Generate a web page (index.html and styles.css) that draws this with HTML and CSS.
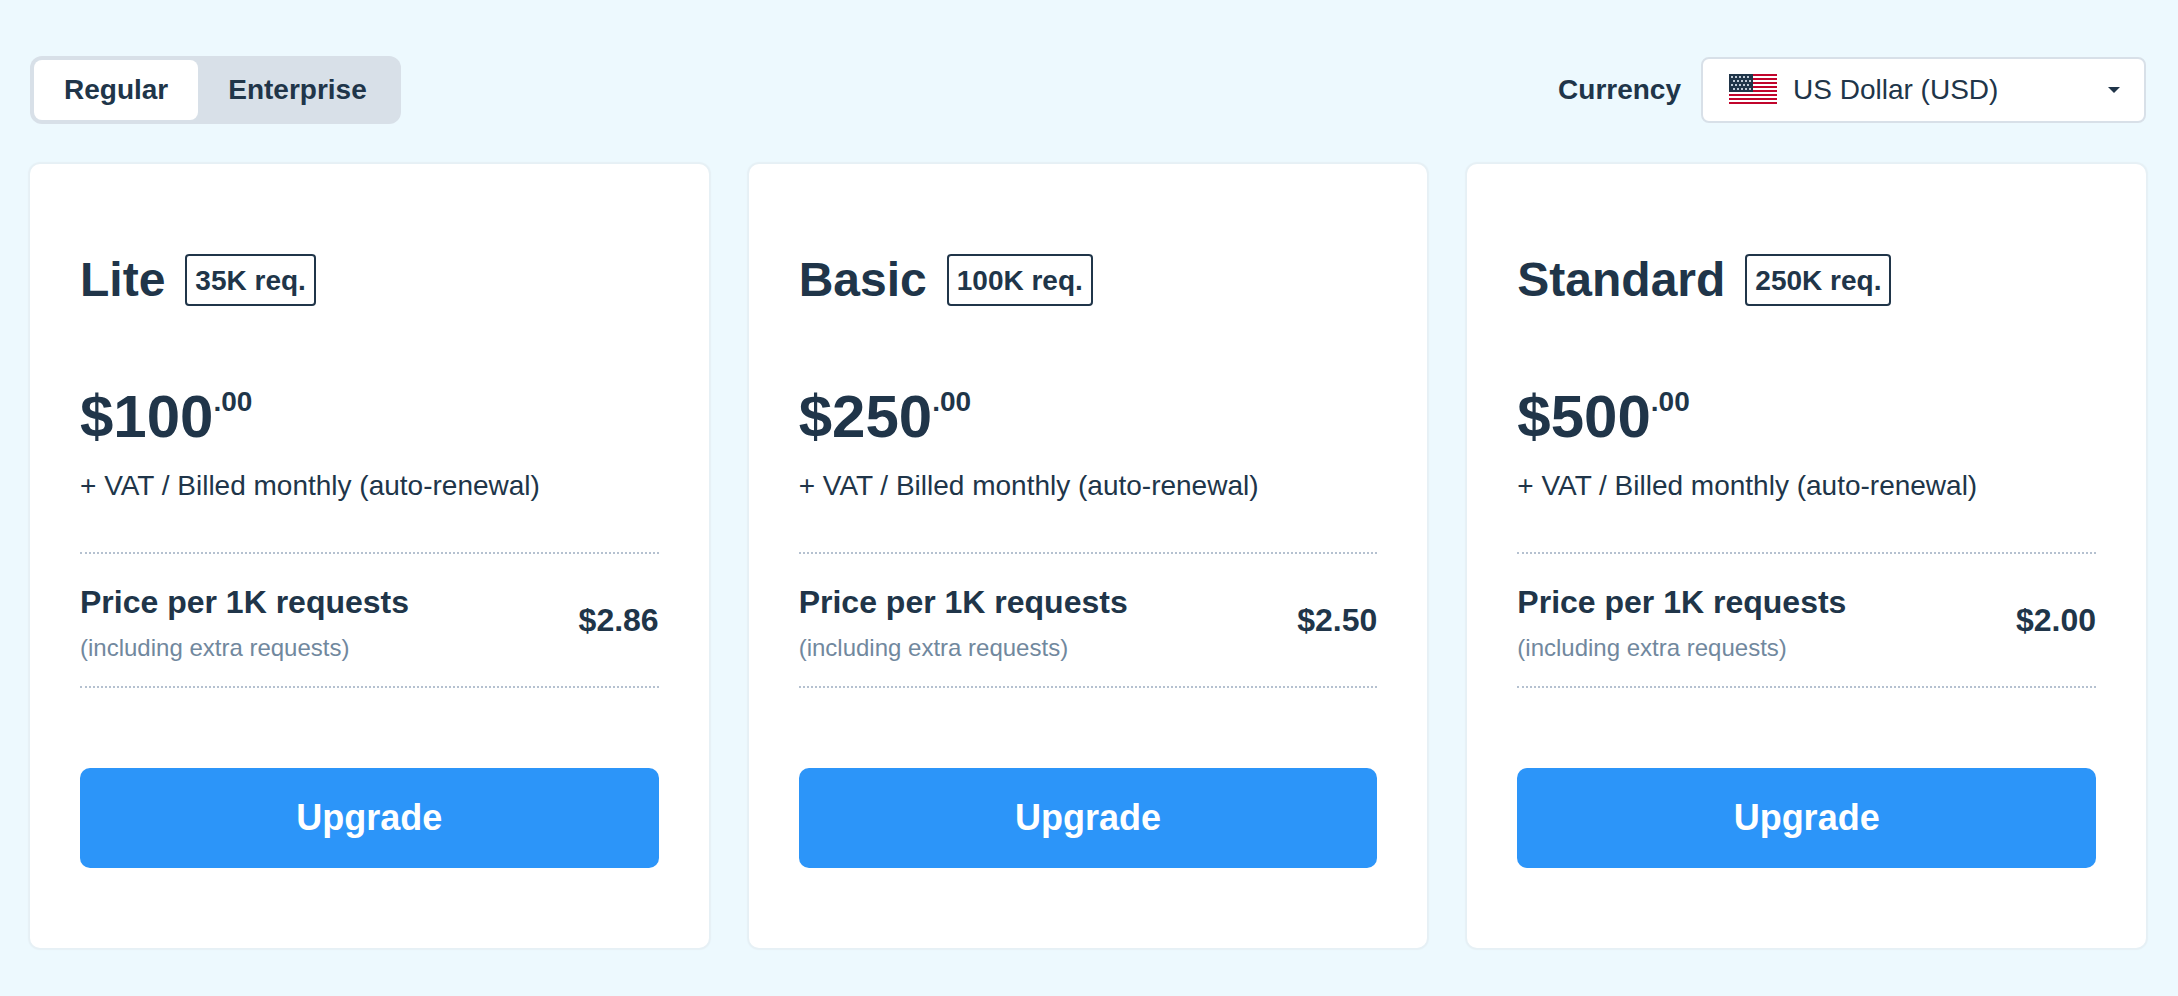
FILE: index.html
```html
<!DOCTYPE html>
<html lang="en">
<head>
  <meta charset="utf-8">
  <title>Pricing</title>
  <link rel="stylesheet" href="styles.css">
</head>
<body>
  <header class="toolbar">
    <div class="toggle">
      <button type="button" class="toggle-btn active">Regular</button>
      <button type="button" class="toggle-btn">Enterprise</button>
    </div>

    <div class="currency">
      <label for="currency">Currency</label>
      <div class="select-wrap">
        <select id="currency">
          <option selected>US Dollar (USD)</option>
        </select>
        <svg class="flag" viewBox="0 0 48 30" width="48" height="30" shape-rendering="crispEdges">
          <rect width="48" height="30" fill="#fff"/>
          <path d="M0 1h48M0 5h48M0 9h48M0 13h48M0 17h48M0 21h48M0 25h48M0 29h48" stroke="#c1052c" stroke-width="2"/>
          <rect width="24" height="18" fill="#203549"/>
          <path d="M2 3h20M2 11h20" stroke="#bfcad6" stroke-width="2" stroke-dasharray="2 2"/>
          <path d="M4 7h20M4 15h20" stroke="#bfcad6" stroke-width="2" stroke-dasharray="2 2"/>
        </svg>
        <svg class="arrow" viewBox="0 0 12 6" width="12" height="6">
          <path d="M0 0h12L6 6z" fill="#203549"/>
        </svg>
      </div>
    </div>
  </header>

  <main class="plans">
    <section class="card">
      <div class="plan-title">
        <h2>Lite</h2>
        <span class="badge">35K req.</span>
      </div>
      <div class="price">$100<span class="cents">.00</span></div>
      <p class="billing">+ VAT / Billed monthly (auto-renewal)</p>
      <div class="rate">
        <div>
          <div class="rate-name">Price per 1K requests</div>
          <div class="rate-note">(including extra requests)</div>
        </div>
        <div class="rate-value">$2.86</div>
      </div>
      <button type="button" class="btn-upgrade">Upgrade</button>
    </section>

    <section class="card">
      <div class="plan-title">
        <h2>Basic</h2>
        <span class="badge">100K req.</span>
      </div>
      <div class="price">$250<span class="cents">.00</span></div>
      <p class="billing">+ VAT / Billed monthly (auto-renewal)</p>
      <div class="rate">
        <div>
          <div class="rate-name">Price per 1K requests</div>
          <div class="rate-note">(including extra requests)</div>
        </div>
        <div class="rate-value">$2.50</div>
      </div>
      <button type="button" class="btn-upgrade">Upgrade</button>
    </section>

    <section class="card">
      <div class="plan-title">
        <h2>Standard</h2>
        <span class="badge">250K req.</span>
      </div>
      <div class="price">$500<span class="cents">.00</span></div>
      <p class="billing">+ VAT / Billed monthly (auto-renewal)</p>
      <div class="rate">
        <div>
          <div class="rate-name">Price per 1K requests</div>
          <div class="rate-note">(including extra requests)</div>
        </div>
        <div class="rate-value">$2.00</div>
      </div>
      <button type="button" class="btn-upgrade">Upgrade</button>
    </section>
  </main>
</body>
</html>
```
FILE: styles.css
```css
* {
  box-sizing: border-box;
}

body {
  margin: 0;
  padding: 56px 32px 48px 30px;
  background-color: #edf9fe;
  color: #203549;
  font-family: "Liberation Sans", Arial, sans-serif;
  font-size: 28px;
}

button,
select {
  font-family: inherit;
  color: inherit;
  cursor: pointer;
}

.toolbar {
  display: flex;
  justify-content: space-between;
  align-items: center;
  margin-bottom: 40px;
}

.toggle {
  display: flex;
  padding: 4px;
  background-color: #d8e0e8;
  border-radius: 12px;
}

.toggle-btn {
  height: 60px;
  padding: 0 30px;
  border: none;
  border-radius: 8px;
  background: none;
  font-size: 28px;
  font-weight: bold;
}

.toggle-btn.active {
  background-color: #fff;
}

.currency {
  display: flex;
  align-items: center;
  gap: 20px;
}

.currency label {
  font-weight: bold;
}

.select-wrap {
  position: relative;
}

.select-wrap select {
  display: block;
  appearance: none;
  width: 445px;
  height: 66px;
  padding: 0 60px 2px 90px;
  border: 2px solid #d8e0e8;
  border-radius: 8px;
  background-color: #fff;
  font-size: 28px;
}

.flag,
.arrow {
  position: absolute;
  pointer-events: none;
}

.flag {
  left: 28px;
  top: 17px;
}

.arrow {
  right: 26px;
  top: 30px;
}

.plans {
  display: grid;
  grid-template-columns: repeat(3, 1fr);
  gap: 40px;
}

.card {
  padding: 90px 50px 80px;
  background-color: #fff;
  border-radius: 10px;
  box-shadow: 0 0 1px 2px #e6f0f5;
}

.plan-title {
  display: flex;
  align-items: center;
  gap: 20px;
}

.plan-title h2 {
  margin: 0;
  font-size: 48px;
  line-height: 52px;
}

.badge {
  padding: 2px 8px 0;
  border: 2px solid #203549;
  border-radius: 4px;
  font-weight: bold;
  line-height: 46px;
}

.price {
  display: flex;
  margin-top: 75px;
  font-size: 60px;
  font-weight: bold;
  line-height: 72px;
}

.cents {
  font-size: 28px;
  line-height: 42px;
}

.billing {
  margin: 13px 0 46px;
  line-height: 40px;
}

.rate {
  display: flex;
  justify-content: space-between;
  align-items: center;
  padding: 20px 0;
  border-top: 2px dotted #b5c1d0;
  border-bottom: 2px dotted #b5c1d0;
}

.rate-name,
.rate-value {
  font-size: 32px;
  font-weight: bold;
  line-height: 56px;
}

.rate-note {
  color: #71889e;
  font-size: 24px;
  line-height: 36px;
}

.btn-upgrade {
  display: block;
  width: 100%;
  height: 100px;
  margin-top: 80px;
  border: none;
  border-radius: 10px;
  background-color: #2c95f9;
  color: #fff;
  font-size: 36px;
  font-weight: bold;
}

.btn-upgrade:hover {
  background-color: #1d86ea;
}
```
